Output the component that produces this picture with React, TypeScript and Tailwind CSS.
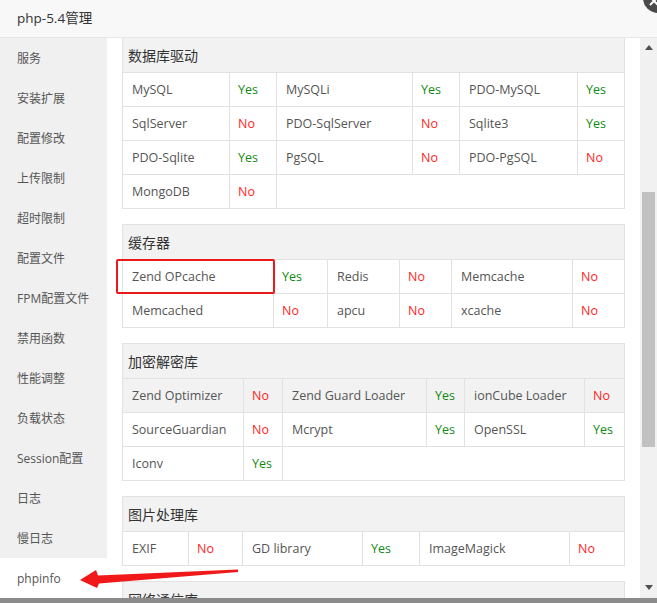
import React from "react";

type Pair = [string, boolean];

type TableDef = {
  title: string;
  widths: string[];
  rows: Pair[][];
};

const MENU = [
  "服务", "安装扩展", "配置修改", "上传限制", "超时限制", "配置文件", "FPM配置文件",
  "禁用函数", "性能调整", "负载状态", "Session配置", "日志", "慢日志", "phpinfo",
];

const TABLES: TableDef[] = [
  {
    title: "数据库驱动",
    widths: ["w-[106px]", "w-[47px]", "w-[136px]", "w-[47px]", "w-[118px]"],
    rows: [
      [["MySQL", true], ["MySQLi", true], ["PDO-MySQL", true]],
      [["SqlServer", false], ["PDO-SqlServer", false], ["Sqlite3", true]],
      [["PDO-Sqlite", true], ["PgSQL", false], ["PDO-PgSQL", false]],
      [["MongoDB", false]],
    ],
  },
  {
    title: "缓存器",
    widths: ["w-[150px]", "w-[54px]", "w-[72px]", "w-[52px]", "w-[121px]"],
    rows: [
      [["Zend OPcache", true], ["Redis", false], ["Memcache", false]],
      [["Memcached", false], ["apcu", false], ["xcache", false]],
    ],
  },
  {
    title: "加密解密库",
    widths: ["w-[120px]", "w-[39px]", "w-[144px]", "w-[38px]", "w-[120px]"],
    rows: [
      [["Zend Optimizer", false], ["Zend Guard Loader", true], ["ionCube Loader", false]],
      [["SourceGuardian", false], ["Mcrypt", true], ["OpenSSL", true]],
      [["Iconv", true]],
    ],
  },
  {
    title: "图片处理库",
    widths: ["w-[65px]", "w-[54px]", "w-[120px]", "w-[57px]", "w-[150px]"],
    rows: [[["EXIF", false], ["GD library", true], ["ImageMagick", false]]],
  },
];

const font = "font-['Open_Sans','Noto_Sans_CJK_SC',sans-serif]";

function InfoTable({ def, index }: { def: TableDef; index: number }) {
  return (
    <div className={`border-x border-b border-[#e2e2e2] mb-[15px] ${index === 0 ? "" : "border-t"}`}>
      <div className="h-[34px] bg-[#f2f2f2] flex items-center pl-[5px] pt-[1px] text-[14px] text-[#333]">{def.title}</div>
      {def.rows.map((row, ri) => {
        // first row of the crypto table is under the mouse
        const hover = index === 2 && ri === 0;
        return (
          <div key={ri} className={`flex h-[34px] border-t border-[#e2e2e2] ${hover ? "bg-[#f2f2f2]" : "bg-white"}`}>
            {row.map(([name, ok], ci) => {
              const nameW = def.widths[ci * 2];
              const valW = ci * 2 + 1 < def.widths.length ? def.widths[ci * 2 + 1] : "flex-1";
              const boxed = index === 1 && ri === 0 && ci === 0;
              return (
                <React.Fragment key={ci}>
                  <div className={`${nameW} relative flex items-center pl-[9px] pt-[2px] text-[12.5px] text-[#555] ${ci > 0 ? "border-l border-[#e2e2e2]" : ""}`}>
                    {name}
                    {boxed && (
                      <div className="absolute left-[-7px] top-[-1px] w-[159px] h-[35px] border-2 border-[#ea1a1a] rounded-[2px]" />
                    )}
                  </div>
                  <div className={`${valW} flex items-center pl-[8px] pt-[2px] text-[12.5px] border-l border-[#e2e2e2] ${ok ? "text-[#108a10]" : "text-[#ff1f1f]"}`}>
                    {ok ? "Yes" : "No"}
                  </div>
                </React.Fragment>
              );
            })}
            {row.length < 3 && <div className="flex-1 border-l border-[#e2e2e2]" />}
          </div>
        );
      })}
    </div>
  );
}

export default function App() {
  return (
    <div className={`relative w-[657px] h-[603px] overflow-hidden bg-white ${font}`}>
      {/* title bar */}
      <div className="h-[38px] bg-[#f8f8f8] border-b border-[#e8e8e8] flex items-center pl-[17px] text-[13.5px] text-[#333]">
        php-5.4管理
      </div>
      <div className="absolute left-[643px] top-[-17px] w-[30px] h-[30px] rounded-full bg-[#4a4a4a] flex items-center justify-center">
        <svg width="12" height="12" viewBox="0 0 12 12" className="mt-[6px] mr-[8px]">
          <path d="M2 2 L10 10 M10 2 L2 10" stroke="#fff" strokeWidth="2" />
        </svg>
      </div>

      <div className="flex h-[560px]">
        {/* sidebar */}
        <div className="w-[107px] flex flex-col">
          {MENU.map((m) => (
            <div
              key={m}
              className={`h-10 flex items-center pl-[17px] pt-[1px] text-[12px] text-[#555] ${m === "phpinfo" ? "bg-white" : "bg-[#f0f0f0]"}`}
            >
              {m}
            </div>
          ))}
        </div>

        {/* content, scrolled so the first table's top edge sits under the title bar */}
        <div className="flex-1 overflow-hidden px-[15px]">
          {TABLES.map((t, i) => (
            <InfoTable key={t.title} def={t} index={i} />
          ))}
          <div className="border border-[#e2e2e2]">
            <div className="h-[34px] bg-[#f2f2f2] flex items-center pl-[5px] pt-[1px] text-[14px] text-[#333]">网络通信库</div>
          </div>
        </div>

        {/* scrollbar */}
        <div className="w-[17px] bg-[#f1f1f1] flex flex-col items-center">
          <svg width="8" height="5" viewBox="0 0 8 5" className="mt-[7px]">
            <path d="M0 5 L4 0 L8 5 Z" fill="#505050" />
          </svg>
          <div className="w-[13px] h-[255px] bg-[#c1c1c1] mt-[142px]" />
          <div className="flex-1" />
          <svg width="8" height="5" viewBox="0 0 8 5" className="mb-[8px]">
            <path d="M0 0 L8 0 L4 5 Z" fill="#505050" />
          </svg>
        </div>
      </div>
      <div className="h-[5px] bg-[#8b8b8b]" />

      {/* annotation arrow */}
      <svg className="absolute left-0 top-0 pointer-events-none" width="657" height="603">
        <polygon
          points="80,580 96,570 98,575.5 238,569.5 238,572 99,583.5 97,588"
          fill="#f01818"
        />
      </svg>
    </div>
  );
}
